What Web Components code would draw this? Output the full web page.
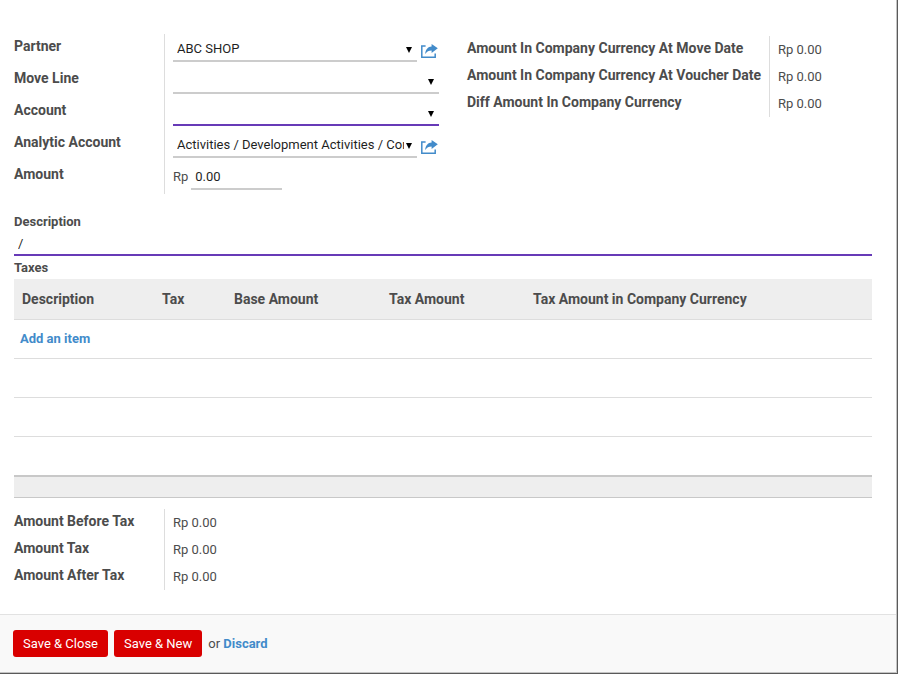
<!DOCTYPE html>
<html lang="en">
<head>
<meta charset="utf-8">
<title>Voucher line</title>
<style>
  body {
    margin: 0;
    background: #5a5a5a;
    color: #4c4c4c;
    font: 13px/20px Roboto, "Liberation Sans", sans-serif;
  }
</style>
</head>
<body>
<voucher-dialog>
  <field-columns>
    <field-group>
      <select-field label="Partner" value="ABC SHOP" openable></select-field>
      <select-field label="Move Line" value=""></select-field>
      <select-field label="Account" value="" required></select-field>
      <select-field label="Analytic Account" value="Activities / Development Activities / Common" openable></select-field>
      <money-field label="Amount" currency="Rp" value="0.00"></money-field>
    </field-group>
    <field-group class="company">
      <read-field label="Amount In Company Currency At Move Date">Rp 0.00</read-field>
      <read-field label="Amount In Company Currency At Voucher Date">Rp 0.00</read-field>
      <read-field label="Diff Amount In Company Currency">Rp 0.00</read-field>
    </field-group>
  </field-columns>
  <text-field label="Description" value="/"></text-field>
  <tax-table heading="Taxes"></tax-table>
  <field-group class="totals">
    <read-field label="Amount Before Tax">Rp 0.00</read-field>
    <read-field label="Amount Tax">Rp 0.00</read-field>
    <read-field label="Amount After Tax">Rp 0.00</read-field>
  </field-group>
  <dialog-actions slot="footer"></dialog-actions>
</voucher-dialog>

<script>
const define = (name, render) => customElements.define(name, class extends HTMLElement {
  connectedCallback() {
    if (this.shadowRoot) return;
    const template = document.createElement('template');
    template.innerHTML = render(this);
    this.attachShadow({ mode: 'open' }).append(template.content.cloneNode(true));
  }
});

const rowStyles = `
  * { box-sizing: border-box; }
  :host { display: grid; grid-template-columns: var(--label-width, 150px) minmax(0, 1fr); }
  .label { font-size: 14px; font-weight: 700; line-height: 24px; white-space: nowrap; }
  .cell { border-left: 1px solid #ddd; padding-left: 8px; }
  select, input {
    appearance: none; border: 0; border-bottom: 2px solid #ccc; border-radius: 0; outline: 0;
    margin: 0; background: none; color: #1f1f1f; font: inherit; height: 26px; padding: 2px 4px 0;
  }
`;

define('voucher-dialog', () => `
  <style>
    * { box-sizing: border-box; }
    :host { display: flex; flex-direction: column; box-sizing: border-box; min-height: 100vh; padding: 0 1px 1px 0; }
    .panel { flex: 1; display: flex; flex-direction: column; background: #fff; border: solid #c4c4c4; border-width: 0 1px 1px 0; }
    main { flex: 1; padding: 34px 24px 24px 14px; }
    footer { border-top: 1px solid #e2e2e2; background: #f9f9f9; padding: 15px 13px; }
  </style>
  <div class="panel">
    <main><slot></slot></main>
    <footer><slot name="footer"></slot></footer>
  </div>`);

define('field-columns', () => `
  <style>
    :host { display: grid; grid-template-columns: 425fr 405fr; gap: 28px; align-items: start; }
    ::slotted(.company) { --label-width: 302px; margin-top: 2px; }
  </style>
  <slot></slot>`);

define('field-group', () => `
  <style>
    :host { display: block; }
    :host(.totals) { margin-top: 11px; }
  </style>
  <slot></slot>`);

define('select-field', el => {
  const value = el.getAttribute('value');
  return `
  <style>
    ${rowStyles}
    .cell { display: flex; gap: 4px; height: 32px; align-items: start; padding-top: 2px; }
    .picker { flex: 1; min-width: 0; display: grid; align-items: center; }
    .picker > * { grid-area: 1 / 1; }
    select { width: 100%; padding-right: 13px; }
    :host([required]) select { border-color: #673ab7; }
    .arrow { justify-self: end; margin: 2px 5px 0 0; pointer-events: none; }
    button { border: 0; padding: 0; margin: 6px 0 0; background: none; color: #428bca; width: 18px; height: 18px; }
    svg { display: block; }
  </style>
  <label class="label" for="control">${el.getAttribute('label')}</label>
  <div class="cell">
    <span class="picker">
      <select id="control"><option>${value}</option></select>
      <svg class="arrow" width="6" height="6" viewBox="0 0 6 6" aria-hidden="true"><path d="M0 0H6L3 6Z" fill="#000"/></svg>
    </span>
    ${el.hasAttribute('openable') ? `
    <button type="button" aria-label="Open ${el.getAttribute('label')}">
      <svg width="18" height="18" viewBox="0 0 18 18" aria-hidden="true">
        <path d="M4.6 4H.8V15.2H14.2V11.6" fill="none" stroke="currentColor" stroke-width="1.5"/>
        <path d="M10.6 2L16.8 6.3L10.6 11V8.4C7.8 8.4 5.8 9.4 4.2 12C4.4 7.4 7 4.6 10.6 4.4Z" fill="currentColor"/>
      </svg>
    </button>` : ''}
  </div>`;
});

define('money-field', el => `
  <style>
    ${rowStyles}
    .cell { display: flex; gap: 3px; height: 32px; padding-top: 2px; line-height: 26px; }
    input { width: 91px; }
  </style>
  <label class="label" for="control">${el.getAttribute('label')}</label>
  <div class="cell"><span>${el.getAttribute('currency')}</span><input id="control" type="text" value="${el.getAttribute('value')}"></div>`);

define('read-field', el => `
  <style>
    ${rowStyles}
    .cell { height: 27px; line-height: 27px; }
  </style>
  <span class="label">${el.getAttribute('label')}</span>
  <div class="cell"><slot></slot></div>`);

define('text-field', el => `
  <style>
    ${rowStyles}
    :host { display: block; margin-top: 18px; }
    label { display: block; font-weight: 700; }
    input { display: block; width: 100%; height: 24px; padding-top: 0; border-color: #673ab7; }
  </style>
  <label for="control">${el.getAttribute('label')}</label>
  <input id="control" type="text" value="${el.getAttribute('value')}">`);

define('tax-table', el => `
  <style>
    :host { display: block; margin-top: 2px; }
    table { width: 100%; table-layout: fixed; border-collapse: separate; border-spacing: 0; text-align: left; }
    caption { text-align: left; font-weight: 700; padding-bottom: 1px; }
    th, td { box-sizing: border-box; white-space: nowrap; border-bottom: 1px solid #ddd; }
    th { height: 41px; padding: 0 8px; background: #eee; font-size: 14px; }
    td { height: 39px; padding: 0 6px; }
    tbody tr:last-child td { height: 38px; border-bottom: 0; }
    tfoot td { height: 23px; background: #eee; border-top: 2px solid #c8c8c8; border-bottom-color: #c8c8c8; }
    a { color: #428bca; font-weight: 700; text-decoration: none; }
  </style>
  <table>
    <caption>${el.getAttribute('heading')}</caption>
    <colgroup><col style="width:140px"><col style="width:72px"><col style="width:155px"><col style="width:144px"><col></colgroup>
    <thead><tr><th>Description</th><th>Tax</th><th>Base Amount</th><th>Tax Amount</th><th>Tax Amount in Company Currency</th></tr></thead>
    <tbody>
      <tr><td colspan="5"><a href="#add">Add an item</a></td></tr>
      <tr><td colspan="5"></td></tr>
      <tr><td colspan="5"></td></tr>
      <tr><td colspan="5"></td></tr>
    </tbody>
    <tfoot><tr><td colspan="5"></td></tr></tfoot>
  </table>`);

define('dialog-actions', () => `
  <style>
    :host { display: flex; align-items: center; gap: 6px; }
    button { height: 27px; padding: 0 10px; border: 0; border-radius: 3px; background: #d90000; color: #fff; font: inherit; }
    a { color: #428bca; font-weight: 700; text-decoration: none; }
  </style>
  <button type="button">Save &amp; Close</button>
  <button type="button">Save &amp; New</button>
  <span>or <a href="#discard">Discard</a></span>`);
</script>
</body>
</html>
